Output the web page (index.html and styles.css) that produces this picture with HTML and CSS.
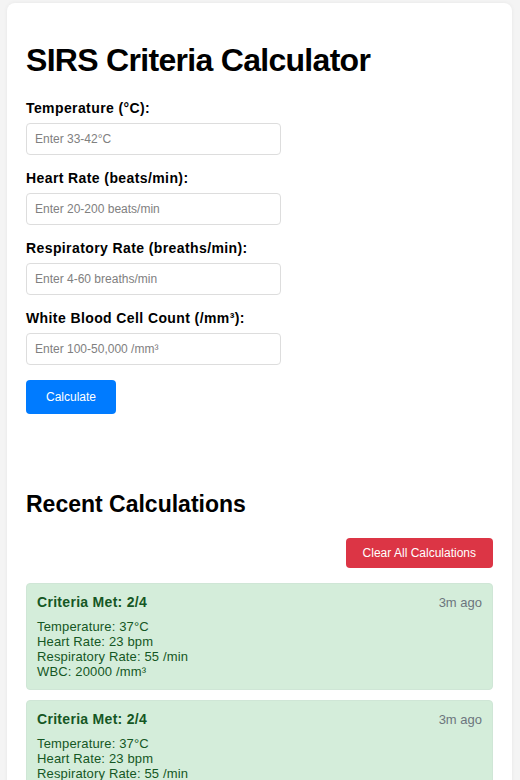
FILE: index.html
```html
<!DOCTYPE html>
<html lang="en">
<head>
<meta charset="utf-8">
<title>SIRS Criteria Calculator</title>
<link rel="stylesheet" href="styles.css">
</head>
<body>
<div class="card">
  <h1>SIRS Criteria Calculator</h1>
  <form class="calc-form">
    <div class="group">
      <label for="temp">Temperature (°C):</label>
      <input id="temp" type="text" placeholder="Enter 33-42°C">
    </div>
    <div class="group">
      <label for="hr">Heart Rate (beats/min):</label>
      <input id="hr" type="text" placeholder="Enter 20-200 beats/min">
    </div>
    <div class="group">
      <label for="rr">Respiratory Rate (breaths/min):</label>
      <input id="rr" type="text" placeholder="Enter 4-60 breaths/min">
    </div>
    <div class="group">
      <label for="wbc">White Blood Cell Count (/mm³):</label>
      <input id="wbc" type="text" placeholder="Enter 100-50,000 /mm³">
    </div>
    <button type="button" class="btn btn-primary">Calculate</button>
  </form>

  <section class="history">
    <h2>Recent Calculations</h2>
    <div class="history-actions">
      <button type="button" class="btn btn-danger">Clear All Calculations</button>
    </div>
    <div class="entry">
      <div class="entry-head">
        <span class="entry-title">Criteria Met: 2/4</span>
        <span class="entry-time">3m ago</span>
      </div>
      <div class="entry-body">
        <div>Temperature: 37°C</div>
        <div>Heart Rate: 23 bpm</div>
        <div>Respiratory Rate: 55 /min</div>
        <div>WBC: 20000 /mm³</div>
      </div>
    </div>
    <div class="entry">
      <div class="entry-head">
        <span class="entry-title">Criteria Met: 2/4</span>
        <span class="entry-time">3m ago</span>
      </div>
      <div class="entry-body">
        <div>Temperature: 37°C</div>
        <div>Heart Rate: 23 bpm</div>
        <div>Respiratory Rate: 55 /min</div>
        <div>WBC: 20000 /mm³</div>
      </div>
    </div>
  </section>
</div>
</body>
</html>
```

FILE: styles.css
```css
html, body {
  margin: 0;
}
body {
  background: #f4f4f4;
  font-family: "Liberation Sans", Arial, sans-serif;
  color: #000;
  padding: 3px 8px 20px 7px;
}
.card {
  background: #fff;
  border-radius: 8px;
  box-shadow: 0 0 4px rgba(0, 0, 0, 0.06);
  padding: 18px 19px 20px 19px;
}
h1 {
  font-size: 32px;
  font-weight: bold;
  letter-spacing: -0.7px;
  margin: 21px 0 21px;
}
.group {
  margin-bottom: 15px;
}
label {
  display: block;
  font-size: 14px;
  font-weight: bold;
  letter-spacing: 0.4px;
  margin-bottom: 7px;
}
input {
  display: block;
  box-sizing: border-box;
  width: 255px;
  height: 32px;
  padding: 8px;
  border: 1px solid #ddd;
  border-radius: 4px;
  font-family: "Liberation Sans", Arial, sans-serif;
  font-size: 12px;
  color: #333;
  background: #fff;
}
input::placeholder {
  color: #808080;
}
.btn {
  border: none;
  border-radius: 4px;
  color: #fff;
  font-family: "Liberation Sans", Arial, sans-serif;
  font-size: 12px;
  cursor: pointer;
}
.btn-primary {
  background: #007bff;
  padding: 10px 20px;
}
.btn-danger {
  background: #dc3545;
  padding: 8px 17px;
}
.history {
  margin-top: 77px;
}
h2 {
  font-size: 23px;
  font-weight: bold;
  margin: 20px 0 20px;
}
.history-actions {
  display: flex;
  justify-content: flex-end;
  margin-bottom: 15px;
}
.entry {
  background: #d4edda;
  border: 1px solid #cfe6d6;
  border-radius: 4px;
  padding: 10px;
  color: #155724;
  margin-bottom: 10px;
}
.entry-head {
  display: flex;
  justify-content: space-between;
  align-items: baseline;
  margin-bottom: 9px;
}
.entry-title {
  font-size: 14px;
  font-weight: bold;
  letter-spacing: 0.3px;
}
.entry-time {
  font-size: 13px;
  color: #6c757d;
}
.entry-body {
  font-size: 13px;
  letter-spacing: 0.15px;
}
```
